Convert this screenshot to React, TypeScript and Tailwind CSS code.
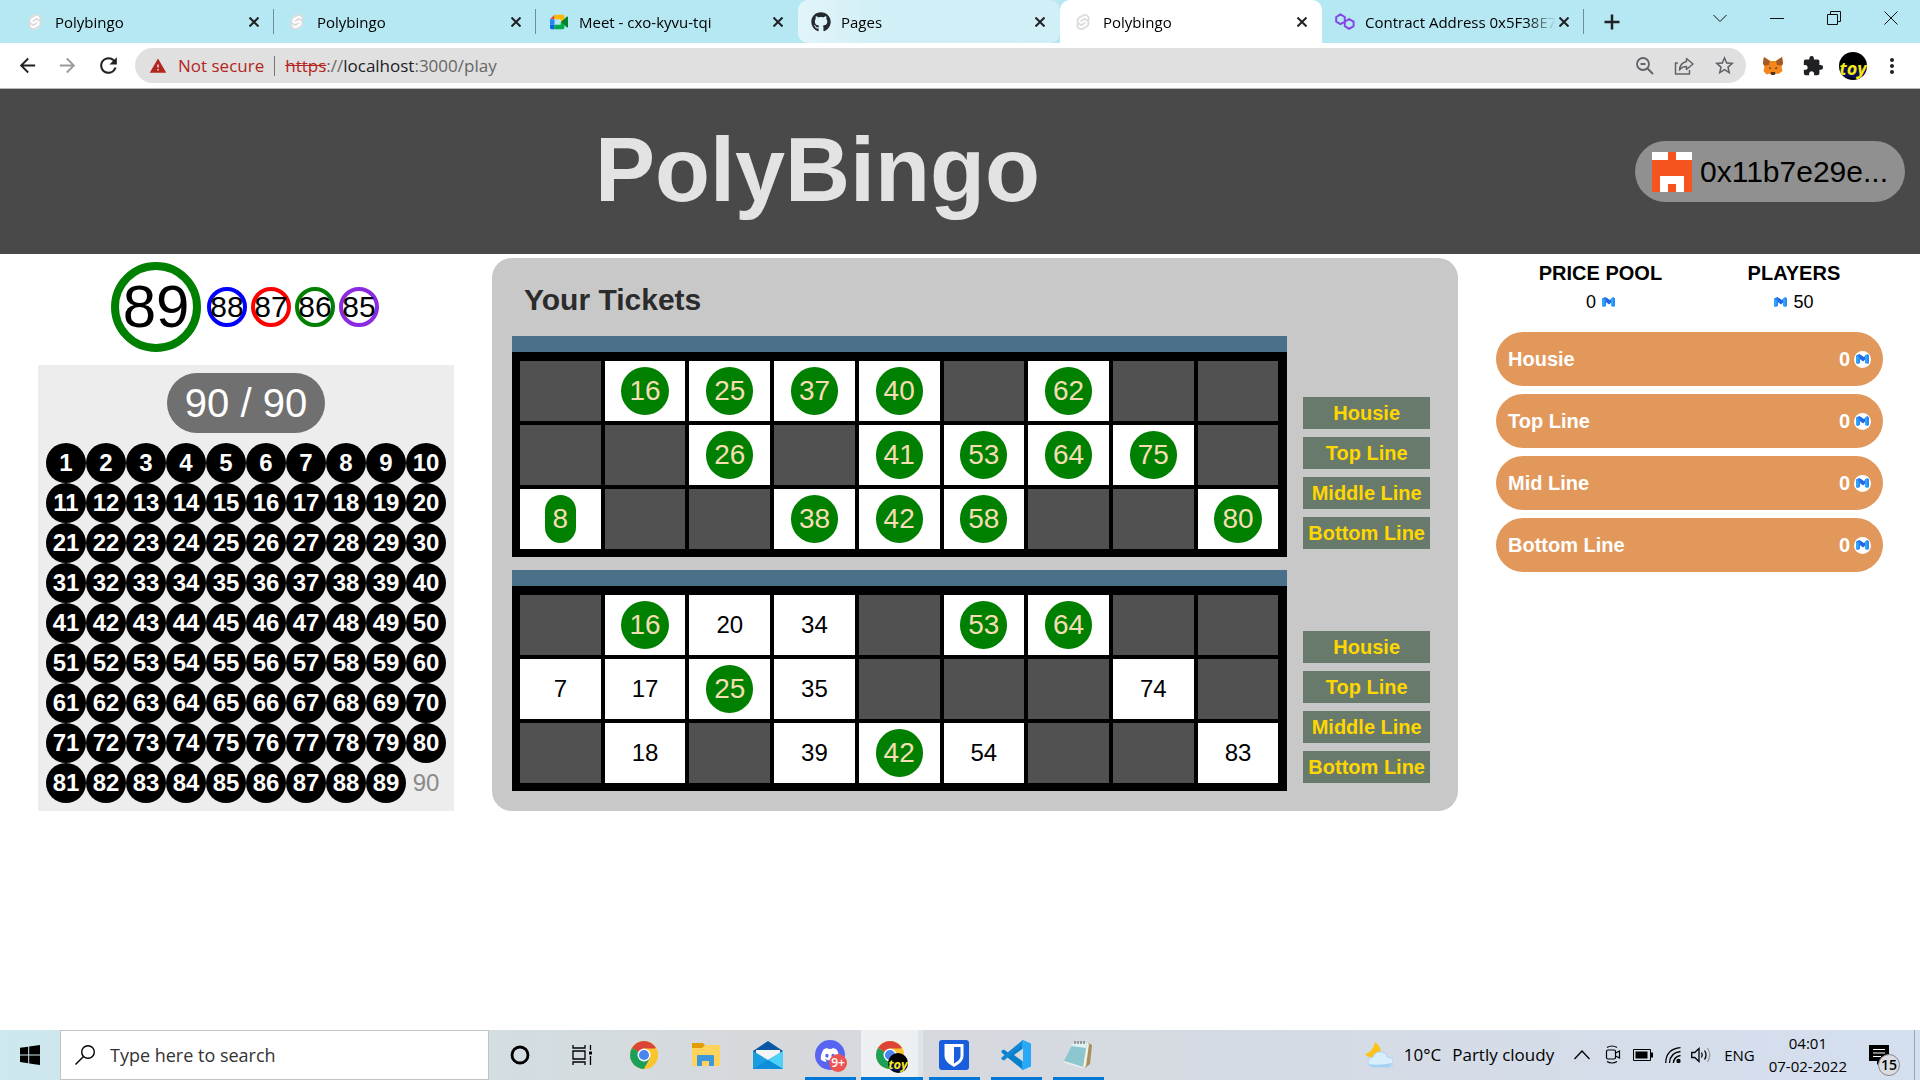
import React from 'react';
import { FaDiscord, FaGithub } from 'react-icons/fa';
import { SiSvelte } from 'react-icons/si';
import { MdArrowBack, MdArrowForward, MdExtension, MdMoreVert, MdRefresh, MdStarOutline, MdWarning } from 'react-icons/md';

const lines = ['Housie', 'Top Line', 'Middle Line', 'Bottom Line'];
const prizes = ['Housie', 'Top Line', 'Mid Line', 'Bottom Line'];

// 0 is an empty cell
const tickets = [
  [
    [0, 16, 25, 37, 40, 0, 62, 0, 0],
    [0, 0, 26, 0, 41, 53, 64, 75, 0],
    [8, 0, 0, 38, 42, 58, 0, 0, 80],
  ],
  [
    [0, 16, 20, 34, 0, 53, 64, 0, 0],
    [7, 17, 25, 35, 0, 0, 0, 74, 0],
    [0, 18, 0, 39, 42, 54, 0, 0, 83],
  ],
];

const marked = [
  [16, 25, 37, 40, 62, 26, 41, 53, 64, 75, 8, 38, 42, 58, 80],
  [16, 53, 64, 25, 42],
];

const recent = [
  { value: 88, border: 'border-[#0000ff]' },
  { value: 87, border: 'border-[#ff0000]' },
  { value: 86, border: 'border-[#008000]' },
  { value: 85, border: 'border-[#8a2be2]' },
];

const SvelteIcon = () => (
  <span className="relative flex h-5 w-4">
    <span className="absolute inset-x-[3px] inset-y-[3px] rounded-full bg-white" />
    <SiSvelte className="relative h-5 w-4 text-[#dcdcdc]" />
  </span>
);

const MeetIcon = () => (
  <svg viewBox="0 0 20 16" className="h-4 w-[18px]">
    <path d="M5 0v5H0z" fill="#ea4335" />
    <path d="M0 5h5v6H0z" fill="#2684fc" />
    <path d="M0 11h5v5H1.500q-1.500 0-1.500-1.500z" fill="#0066da" />
    <path d="M5 0h9.500Q16 0 16 1.500V5l-4 3V5H5z" fill="#ffba00" />
    <path d="M5 11h7V8l4 3v3.500q0 1.500-1.500 1.500H5z" fill="#00ac47" />
    <path d="M12 8l7-6q1-.6 1 .5v11q0 1.100-1 .5z" fill="#00832d" />
  </svg>
);

const PolygonIcon = () => (
  <svg viewBox="0 0 20 18" className="h-[18px] w-5" fill="none" stroke="#8247e5" strokeWidth="2" strokeLinejoin="round">
    <path d="M10 8.500L5.500 11.200 1.200 8.600V4L5.500 1.300 9.800 4v9.200l4.300 2.700 4.500-2.700V8.700l-4.500-2.600-4.100 2.400" />
  </svg>
);

const tabs = [
  { title: 'Polybingo', icon: <SvelteIcon />, separator: true },
  { title: 'Polybingo', icon: <SvelteIcon />, separator: true },
  { title: 'Meet - cxo-kyvu-tqi', icon: <MeetIcon /> },
  { title: 'Pages', icon: <FaGithub className="h-5 w-5 text-[#24292f]" />, hovered: true },
  { title: 'Polybingo', icon: <SvelteIcon />, active: true },
  { title: 'Contract Address 0x5F38E7', icon: <PolygonIcon />, separator: true },
];

const TabBar = () => (
  <div className="flex h-[43px] bg-[#b5e8f2] pr-px pl-3">
    {tabs.map((tab, i) => (
      <div
        key={i}
        className={`relative flex w-[262px] min-w-0 items-center pr-[12px] pl-[13px] ${
          tab.active ? 'rounded-t-[10px] bg-white' : ''
        } ${tab.hovered ? 'rounded-[10px] bg-linear-to-r from-[#e2f5fa] to-[#d1eff6] to-30%' : ''}`}
      >
        <span className="flex w-5 shrink-0 justify-center">{tab.icon}</span>
        <span className="ml-[10px] min-w-0 flex-1 overflow-hidden text-[15px] leading-5 whitespace-nowrap [mask-image:linear-gradient(to_right,black_85%,transparent)]">
          {tab.title}
        </span>
        <button aria-label="Close tab" className="flex w-4 justify-center">
          <svg viewBox="0 0 10 10" className="h-[10px] w-[10px]" stroke="#202124" strokeWidth="2">
            <path d="M.5.5l9 9M9.500.5l-9 9" />
          </svg>
        </button>
        {tab.separator && <span className="absolute top-[9px] right-0 h-[25px] w-px bg-[#6f8f98]" />}
      </div>
    ))}
    <button aria-label="New tab" className="flex w-14 items-center justify-center">
      <svg viewBox="0 0 16 16" className="h-4 w-4" stroke="#202124" strokeWidth="2.500">
        <path d="M8 .5v15M.5 8h15" />
      </svg>
    </button>
    <div className="ml-auto flex h-9 [&>button]:flex [&>button]:w-[57px] [&>button]:items-center [&>button]:justify-center">
      <button aria-label="Search tabs">
        <svg viewBox="0 0 14 14" className="h-[14px] w-[14px]" fill="none" stroke="#111">
          <path d="M.5 4L7 10.500 13.500 4" />
        </svg>
      </button>
      <button aria-label="Minimize">
        <svg viewBox="0 0 14 14" className="h-[14px] w-[14px]" fill="none" stroke="#111">
          <path d="M0 7.500h14" />
        </svg>
      </button>
      <button aria-label="Restore">
        <svg viewBox="0 0 14 14" className="h-[14px] w-[14px]" fill="none" stroke="#111">
          <path d="M.5 3.500h10v10h-10zM3.500 3V.5h10v10H11" />
        </svg>
      </button>
      <button aria-label="Close">
        <svg viewBox="0 0 14 14" className="h-[14px] w-[14px]" fill="none" stroke="#111">
          <path d="M.5.5l13 13M13.500.5l-13 13" />
        </svg>
      </button>
    </div>
  </div>
);

const FoxIcon = () => (
  <svg viewBox="0 0 20 18" className="h-[18px] w-5">
    <path d="M1 0l6 4h6l6-4 1 6-1.500 4 1 4-4 3-3-.5-1.500 1.500h-2L6.500 16.500 3.500 17.500l-3-3.500 1-4L0 6z" fill="#f6851b" />
    <path d="M1 0l6 4-1 4-5 .5L0 6zM19 0l-6 4 1 4 5 .5 1-2.500z" fill="#a35a2a" />
    <path d="M6 10l2.500 1.200L6.500 12zM14 10l-2.500 1.200 2 .8z" fill="#233447" />
    <path d="M8 15h4l.5 2-1.500 1H9l-1.500-1z" fill="#4a3426" />
  </svg>
);

const ProfileIcon = ({ className }: { className: string }) => (
  <svg viewBox="0 0 28 28" className={`overflow-hidden rounded-full ${className}`}>
    <rect width="28" height="28" fill="#000" />
    <ellipse cx="14" cy="20" rx="14" ry="6" fill="#0a0a55" />
    <text x="14" y="23" textAnchor="middle" fontSize="18" fontWeight="700" fontStyle="italic" fill="#f4ea10">
      toy
    </text>
  </svg>
);

const Toolbar = () => (
  <div className="flex h-[46px] items-center border-b border-[#b9b9b9] bg-white px-4">
    <button aria-label="Back"><MdArrowBack className="h-[23px] w-[23px] text-[#202124]" /></button>
    <button aria-label="Forward" className="ml-[17px]"><MdArrowForward className="h-[23px] w-[23px] text-[#9a9a9a]" /></button>
    <button aria-label="Reload" className="ml-[17px]"><MdRefresh className="h-[25px] w-[25px] text-[#202124]" /></button>
    <div className="ml-[14px] flex h-[35px] min-w-0 flex-1 items-center rounded-full bg-[#e0e0e0] pr-[10px] pl-[14px] text-[17px] text-[#666]">
      <MdWarning className="h-[18px] w-[18px] text-[#b3261e]" />
      <span className="ml-[11px] text-[#b3261e]">Not secure</span>
      <span className="mx-[10px] h-5 w-px bg-[#777]" />
      <span className="text-[#b3261e] line-through">https</span>
      <span>://</span>
      <span className="text-[#202124]">localhost</span>
      <span>:3000/play</span>
      <div className="ml-auto flex items-center gap-[19px]">
        <button aria-label="Zoom">
          <svg viewBox="0 0 20 20" className="h-5 w-5" fill="none" stroke="#5f6368" strokeWidth="1.800">
            <circle cx="8" cy="8" r="6" />
            <path d="M12.500 12.500L18 18M5.500 8h5" />
          </svg>
        </button>
        <button aria-label="Share">
          <svg viewBox="0 0 20 20" className="h-5 w-5" fill="none" stroke="#5f6368" strokeWidth="1.500" strokeLinejoin="round">
            <path d="M4 7H1.500v11h14v-4M12.500 2.500L19 8l-6.500 5.500V10.500Q8 10.500 5.500 14 6 7 12.500 5.500z" />
          </svg>
        </button>
        <button aria-label="Bookmark"><MdStarOutline className="h-[23px] w-[23px] text-[#5f6368]" /></button>
      </div>
    </div>
    <button aria-label="Wallet" className="ml-[17px]"><FoxIcon /></button>
    <button aria-label="Extensions" className="ml-[19px]"><MdExtension className="h-[22px] w-[22px] text-[#202124]" /></button>
    <button aria-label="Profile" className="ml-[15px]"><ProfileIcon className="h-7 w-7" /></button>
    <button aria-label="Menu" className="ml-[13px]"><MdMoreVert className="h-6 w-6 text-[#202124]" /></button>
  </div>
);

const Header = () => (
  <header className="flex h-[165px] items-center bg-[#494949] pr-[15px]">
    <h1 className="flex-1 pb-1 text-center text-[90px] leading-[100px] font-bold text-[#e3e3e3]">PolyBingo</h1>
    <button className="flex h-[61px] items-center gap-2 rounded-full bg-[#909090] px-[17px] text-3xl text-black">
      <svg viewBox="0 0 5 5" className="h-10 w-10" shapeRendering="crispEdges">
        <path d="M0 0h5v5H0z" fill="#f6541f" />
        <path d="M0 0h2v1H0zM3 0h2v1H3zM1 3h3v2H3V4H2v1H1z" fill="#fff" />
      </svg>
      0x11b7e29e...
    </button>
  </header>
);

const CoinIcon = ({ className }: { className: string }) => (
  <svg viewBox="0 0 26 20" className={className}>
    <path d="M0 3l6-3 8 5v9l-6-4v8l-5 2-3-2z" fill="#2b86f3" />
    <path d="M0 4l5 2v13l-5-1z" fill="#2fa6fb" />
    <path d="M6 0l10 6 4-4v8l-6 5-6-5V7z" fill="#2766e8" />
    <path d="M18 3l4-3 4 3v15l-4 2-4-2z" fill="#2aa8fb" />
    <path d="M22 0l4 3v15l-3 1z" fill="#2b86f3" />
  </svg>
);

const NumberBoard = () => (
  <section className="px-[38px] pt-2">
    <div className="flex items-center justify-center gap-1 pr-[2px]">
      <span className="mr-0.5 flex h-[90px] w-[90px] items-center justify-center rounded-full border-8 border-[#008000] text-6xl">89</span>
      {recent.map((ball) => (
        <span key={ball.value} className={`flex h-10 w-10 items-center justify-center rounded-full border-4 text-3xl ${ball.border}`}>
          {ball.value}
        </span>
      ))}
    </div>
    <div className="mt-[13px] bg-[#ededed] p-2">
      <div className="mx-auto flex h-[60px] w-fit items-center rounded-full bg-[#707070] px-[18px] text-[40px] text-white">
        90 / 90
      </div>
      <div className="mt-[10px] grid grid-cols-10 text-2xl">
        {Array.from({ length: 90 }, (_, i) => i + 1).map((n) => (
          <span
            key={n}
            className={`flex h-10 items-center justify-center rounded-full ${n < 90 ? 'bg-black font-bold text-white' : 'text-[#8a8a8a]'}`}
          >
            {n}
          </span>
        ))}
      </div>
    </div>
  </section>
);

const Ticket = ({ rows, hits }: { rows: number[][]; hits: number[] }) => (
  <div className="flex gap-4">
    <div className="min-w-0 flex-1">
      <div className="h-4 bg-[#4a7189]" />
      <div className="bg-black pt-[5px] pr-[5px] pb-1 pl-1">
        <table className="w-full table-fixed border-separate border-spacing-1">
          <tbody>
            {rows.map((row, r) => (
              <tr key={r}>
                {row.map((n, c) => (
                  <td key={c} className={`h-[60px] p-0 text-center text-2xl ${n ? 'bg-white' : 'bg-[#515151]'}`}>
                    {n > 0 && hits.includes(n) && (
                      <span className="mx-auto flex h-12 w-fit items-center rounded-full bg-[#008000] px-2 text-[28px] text-[#f5deb3]">{n}</span>
                    )}
                    {n > 0 && !hits.includes(n) && n}
                  </td>
                ))}
              </tr>
            ))}
          </tbody>
        </table>
      </div>
    </div>
    <div className="flex flex-col justify-end gap-2 pb-2">
      {lines.map((line) => (
        <button key={line} className="h-8 bg-[#687a6b] px-[5px] text-xl font-bold text-[#ffd700]">
          {line}
        </button>
      ))}
    </div>
  </div>
);

const Tickets = () => (
  <section className="mt-1 rounded-[20px] bg-[#c8c8c8] pt-[22px] pr-7 pb-5 pl-5">
    <h2 className="mb-4 ml-3 text-3xl leading-10 font-bold text-[#2b2b2b]">Your Tickets</h2>
    <div className="flex flex-col gap-[13px]">
      {tickets.map((rows, i) => (
        <Ticket key={i} rows={rows} hits={marked[i]} />
      ))}
    </div>
  </section>
);

const Prizes = () => (
  <section className="pt-1 pr-[37px] pl-[38px]">
    <div className="flex justify-around text-center">
      <div>
        <h3 className="text-xl leading-[30px] font-bold">PRICE POOL</h3>
        <p className="flex items-center justify-center gap-[6px] text-lg">
          0 <CoinIcon className="h-[10px] w-[13px]" />
        </p>
      </div>
      <div>
        <h3 className="text-xl leading-[30px] font-bold">PLAYERS</h3>
        <p className="flex items-center justify-center gap-[6px] text-lg">
          <CoinIcon className="h-[10px] w-[13px]" /> 50
        </p>
      </div>
    </div>
    <ul className="mt-4 flex flex-col gap-2">
      {prizes.map((prize) => (
        <li key={prize} className="flex h-[54px] items-center justify-between rounded-[27px] bg-[#e3985b] px-3 text-xl font-bold text-white">
          <span>{prize}</span>
          <span className="flex items-center gap-1">
            0
            <span className="flex h-[17px] w-[17px] items-center justify-center rounded-full bg-white">
              <CoinIcon className="h-[10px] w-[13px]" />
            </span>
          </span>
        </li>
      ))}
    </ul>
  </section>
);

const ChromeIcon = () => (
  <svg viewBox="0 0 28 28" className="h-7 w-7">
    <circle cx="14" cy="14" r="14" fill="#fbc52f" />
    <path d="M14 14L1.900 7A14 14 0 0 1 26.100 7z" fill="#dc4437" />
    <path d="M14 14L1.900 7A14 14 0 0 0 14 28l6-10.500z" fill="#1ba05a" />
    <path d="M14 7.500h12.400A14 14 0 0 1 14 28l5.800-10.500z" fill="#fbc52f" />
    <circle cx="14" cy="14" r="6.500" fill="#fff" />
    <circle cx="14" cy="14" r="5.100" fill="#4b86ee" />
  </svg>
);

const taskbarApps = [
  {
    name: 'Cortana',
    icon: (
      <svg viewBox="0 0 20 20" className="h-5 w-5" fill="none" stroke="#000" strokeWidth="2.800">
        <circle cx="10" cy="10" r="8" />
      </svg>
    ),
  },
  {
    name: 'Task View',
    icon: (
      <svg viewBox="0 0 20 20" className="h-5 w-5" fill="none" stroke="#000" strokeWidth="1.300">
        <path d="M1 0v3h12V0M1 6h12v8H1zM1 20v-3h12v3M18.500 0v5M18.500 11v9" />
        <path d="M17 6.500h3v3h-3z" fill="#000" stroke="none" />
      </svg>
    ),
  },
  { name: 'Chrome', icon: <ChromeIcon /> },
  {
    name: 'File Explorer',
    icon: (
      <svg viewBox="0 0 28 24" className="h-6 w-7">
        <path d="M0 0h11l3 3v4H0z" fill="#e29c06" />
        <path d="M0 5h10l3-3h15v21H0z" fill="#ffd35c" />
        <path d="M5 23V13q0-1 1-1h15q1 0 1 1v10h-5v-5h-7v5z" fill="#3c97dc" />
      </svg>
    ),
  },
  {
    name: 'Mail',
    icon: (
      <svg viewBox="0 0 30 28" className="h-7 w-[30px]">
        <path d="M0 10L15 0l15 10v4H0z" fill="#0b57a4" />
        <path d="M3 9h24v8l-12 5-12-5z" fill="#f4f4f4" />
        <path d="M0 10l15 9 15-9v18H0z" fill="#1b9de2" />
        <path d="M30 10L15 19l15 9z" fill="#4fd0f7" />
        <path d="M0 28l15-9 15 9z" fill="#0f8ddb" />
      </svg>
    ),
  },
  {
    name: 'Discord',
    open: true,
    icon: (
      <span className="relative flex h-[30px] w-[30px] items-center justify-center rounded-full bg-[#5865f2]">
        <FaDiscord className="h-5 w-5 text-white" />
        <span className="absolute -right-0.5 -bottom-0.5 flex h-[18px] w-[18px] items-center justify-center rounded-full bg-[#ef5350] text-xs font-semibold text-white">
          9+
        </span>
      </span>
    ),
  },
  {
    name: 'Chrome window',
    open: true,
    active: true,
    icon: (
      <span className="relative">
        <ChromeIcon />
        <ProfileIcon className="absolute -right-1 -bottom-1 h-5 w-5" />
      </span>
    ),
  },
  {
    name: 'Bitwarden',
    open: true,
    icon: (
      <svg viewBox="0 0 30 30" className="h-[30px] w-[30px]">
        <rect width="30" height="30" rx="3" fill="#175ddc" />
        <path d="M5.500 4h19v12q0 6-9.500 11Q5.500 22 5.500 16z" fill="#fff" />
        <path d="M15 7h6.500v9q0 4-6.500 7.500z" fill="#175ddc" />
      </svg>
    ),
  },
  {
    name: 'Visual Studio Code',
    open: true,
    icon: (
      <svg viewBox="0 0 30 30" className="h-[30px] w-[30px]">
        <path d="M22 0L7.500 13 3 9.500.5 10.800v1.700L22 30l2-2-2-6V8z" fill="#0a7fcb" />
        <path d="M.5 19.200L3 20.500 22 5V0L.5 17.500z" fill="#1287d3" />
        <path d="M22 0l8 3.500v23L22 30l-1-1.500V1.500z" fill="#27a9f5" />
        <path d="M22 8.500v13L13 15z" fill="#d6d9dd" />
      </svg>
    ),
  },
  {
    name: 'Notepad',
    open: true,
    icon: (
      <svg viewBox="0 0 28 28" className="h-7 w-7">
        <path d="M24 2l4 2-2 19-5 4z" fill="#a98f5c" />
        <path d="M22 2l3 1-3 22-3 2z" fill="#f4f0e2" />
        <path d="M9 2h14l-4 24L0 20z" fill="#8cc6cf" />
        <path d="M9 2h14l-1 5-15-2z" fill="#dff1f3" />
        <path d="M0 20l19 6v1.500L0 21.500z" fill="#e9eef0" />
        <path d="M11 0v3M14 0v3M17 0v3M20 0v3" stroke="#555" />
      </svg>
    ),
  },
];

const Taskbar = () => (
  <footer className="flex h-[50px] items-stretch bg-linear-to-r from-[#cde8ef] via-[#d6d8db] via-40% to-[#d4dfef]">
    <button aria-label="Start" className="flex w-[60px] items-center justify-center">
      <svg viewBox="0 0 20 20" className="h-5 w-5">
        <path d="M0 2.800l8.200-1.100v7.700H0zM9.200 1.500L20 0v9.400H9.200zM0 10.400h8.200v7.800L0 17.100zM9.200 10.400H20V20L9.200 18.400z" />
      </svg>
    </button>
    <label className="flex w-[429px] items-center gap-[15px] border border-[#c4c4c4] bg-white pl-[14px]">
      <svg viewBox="0 0 20 20" className="h-5 w-5" fill="none" stroke="#000" strokeWidth="1.400">
        <circle cx="13" cy="7" r="6.300" />
        <path d="M8.500 11.500L.5 19.500" />
      </svg>
      <input type="text" placeholder="Type here to search" aria-label="Search" className="min-w-0 flex-1 text-lg placeholder:text-[#333]" />
    </label>
    {taskbarApps.map((app) => (
      <button
        key={app.name}
        aria-label={app.name}
        className={`relative flex w-[62px] items-center justify-center ${app.active ? 'border-r-[5px] border-[#dfe4e8] bg-[#edf0f2]' : ''}`}
      >
        {app.icon}
        {app.open && (
          <span className={`absolute bottom-0 h-[3px] bg-[#0078d7] ${app.active ? 'left-0 w-[62px]' : 'left-[6px] w-[51px]'}`} />
        )}
      </button>
    ))}
    <div className="ml-auto flex items-center text-[15px]">
      <button className="flex items-center gap-[11px] text-[17px]">
        <svg viewBox="0 0 28 26" className="h-[26px] w-7">
          <path d="M10 0q6 4 6 11l-6 6Q2 15 0 12q8-2 10-12z" fill="#ffc21a" />
          <path d="M8 25q-5-1-5-5t5-5q2-6 9-5 5 1 5 5 6 0 6 5t-5 5z" fill="#d9eefd" stroke="#a3cdf0" strokeWidth=".8" />
          <path d="M4 22q10 2 23-1-1 4-4 4H8q-3 0-4-3z" fill="#a3d2f7" />
        </svg>
        <span>10°C</span>
        <span>Partly cloudy</span>
      </button>
      <button aria-label="Show hidden icons" className="ml-[20px]">
        <svg viewBox="0 0 16 16" className="h-4 w-4" fill="none" stroke="#000" strokeWidth="1.300">
          <path d="M.5 12L8 4l7.500 8" />
        </svg>
      </button>
      <button aria-label="Meet now" className="ml-[15px]">
        <svg viewBox="0 0 16 20" className="h-5 w-4" fill="none" stroke="#000" strokeWidth="1.200">
          <rect x="1.500" y="5" width="9" height="9" rx="1.500" />
          <path d="M10.500 8l4-2v7l-4-2M2 2.500q5-3 10 0M2 16.500q5 3 10 0" />
        </svg>
      </button>
      <button aria-label="Battery" className="ml-3">
        <svg viewBox="0 0 20 12" className="h-3 w-5">
          <path d="M.5.5h17v11H.5z" fill="none" stroke="#000" />
          <path d="M2.500 2.500h12v7h-12zM18 3.500h2v5h-2z" />
        </svg>
      </button>
      <button aria-label="Network" className="ml-3">
        <svg viewBox="0 0 16 16" className="h-4 w-4" fill="none" stroke="#000" strokeWidth="1.300">
          <path d="M.7 16Q1 2 15.500.7M4.500 16Q5 5.500 15.500 4.500M8.300 16Q9 9.500 15.500 8.500" />
          <circle cx="13.500" cy="14" r="1.500" fill="#000" />
        </svg>
      </button>
      <button aria-label="Volume" className="ml-[10px]">
        <svg viewBox="0 0 20 18" className="h-[18px] w-5" fill="none" stroke="#000" strokeWidth="1.300">
          <path d="M.7 6.500h3L8 2.500v13l-4.300-4h-3zM10.500 6.500q1.500 2.500 0 5M13.500 4.500q3 4.500 0 9" />
          <path d="M16.500 2q4.500 7 0 14" stroke="#999" />
        </svg>
      </button>
      <span className="ml-[13px]">ENG</span>
      <div className="ml-[14px] text-center leading-[23px]">
        <div>04:01</div>
        <div>07-02-2022</div>
      </div>
      <button aria-label="Notifications" className="relative ml-[22px]">
        <svg viewBox="0 0 20 20" className="h-5 w-5">
          <path d="M0 0h20v16h-8l-4 4v-4H0z" />
          <path d="M4 4.500h12M4 8h12M4 11.500h8" stroke="#fff" strokeWidth="1.200" />
        </svg>
        <span className="absolute top-[9px] left-[9px] flex h-[22px] w-[22px] items-center justify-center rounded-full border border-[#888] bg-[#d9dde2] text-sm font-semibold">
          15
        </span>
      </button>
      <span className="mr-[5px] ml-[25px] h-full w-px bg-[#9aa6b5]" />
    </div>
  </footer>
);

export default function App() {
  return (
    <div className="flex min-h-screen flex-col bg-white font-['Open_Sans',sans-serif] text-black">
      <TabBar />
      <Toolbar />
      <div className="flex-1 font-['Liberation_Sans',Arial,sans-serif]">
        <Header />
        <main className="grid grid-cols-[492px_minmax(0,1fr)_462px] items-start">
          <NumberBoard />
          <Tickets />
          <Prizes />
        </main>
      </div>
      <Taskbar />
    </div>
  );
}
